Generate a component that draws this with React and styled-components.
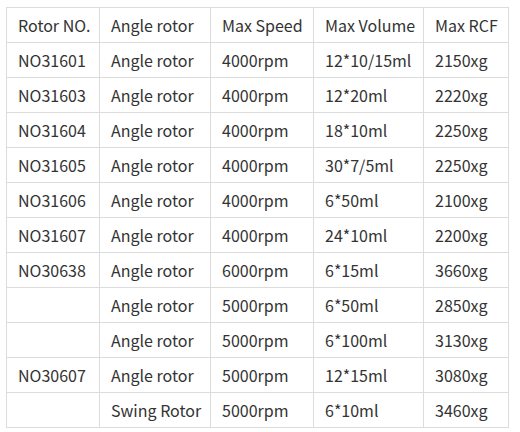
import styled, { createGlobalStyle } from 'styled-components'

const Global = createGlobalStyle`
  body {
    margin: 0;
    background: #fff;
    font-family: "Noto Sans CJK SC", "Noto Sans", sans-serif;
  }
`

const Wrap = styled.div`
  padding: 7px 0 0 6px;
`

const Table = styled.table`
  border-collapse: collapse;
  table-layout: fixed;
  width: 502px;
  color: #333;
  font-size: 16px;
`

const Cell = styled.td`
  border: 1px solid #dcdcdc;
  height: 34px;
  padding: 0 0 0 11px;
  line-height: 20px;
  white-space: nowrap;
  vertical-align: middle;
`

const widths = [93, 111, 103, 110, 85]

const rows = [
  ['Rotor NO.', 'Angle rotor', 'Max Speed', 'Max Volume', 'Max RCF'],
  ['NO31601', 'Angle rotor', '4000rpm', '12*10/15ml', '2150xg'],
  ['NO31603', 'Angle rotor', '4000rpm', '12*20ml', '2220xg'],
  ['NO31604', 'Angle rotor', '4000rpm', '18*10ml', '2250xg'],
  ['NO31605', 'Angle rotor', '4000rpm', '30*7/5ml', '2250xg'],
  ['NO31606', 'Angle rotor', '4000rpm', '6*50ml', '2100xg'],
  ['NO31607', 'Angle rotor', '4000rpm', '24*10ml', '2200xg'],
  ['NO30638', 'Angle rotor', '6000rpm', '6*15ml', '3660xg'],
  ['', 'Angle rotor', '5000rpm', '6*50ml', '2850xg'],
  ['', 'Angle rotor', '5000rpm', '6*100ml', '3130xg'],
  ['NO30607', 'Angle rotor', '5000rpm', '12*15ml', '3080xg'],
  ['', 'Swing Rotor', '5000rpm', '6*10ml', '3460xg'],
]

export default function App() {
  return (
    <>
      <Global />
      <Wrap>
        <Table>
          <colgroup>
            {widths.map((w, i) => (
              <col key={i} style={{ width: w }} />
            ))}
          </colgroup>
          <tbody>
            {rows.map((r, i) => (
              <tr key={i}>
                {r.map((c, j) => (
                  <Cell key={j}>{c}</Cell>
                ))}
              </tr>
            ))}
          </tbody>
        </Table>
      </Wrap>
    </>
  )
}
